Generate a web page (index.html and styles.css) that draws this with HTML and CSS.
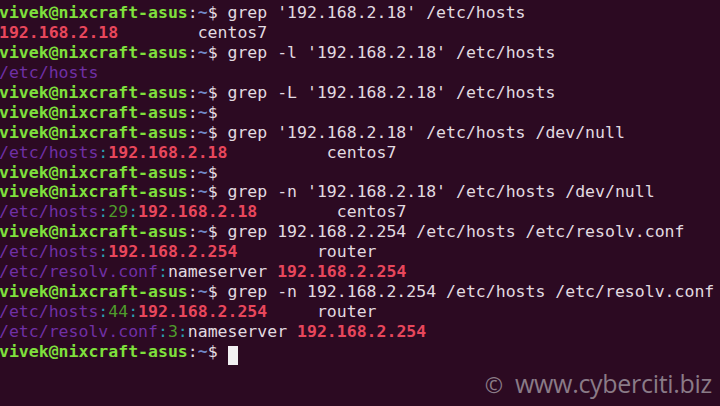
FILE: index.html
```html
<!DOCTYPE html>
<html>
<head>
<meta charset="utf-8">
<link rel="stylesheet" href="styles.css">
</head>
<body>
<div class="term">
<div class="ln"><span class="u">vivek@nixcraft-asus</span>:<span class="d">~</span>$ grep '192.168.2.18' /etc/hosts</div>
<div class="ln"><span class="m">192.168.2.18</span>        centos7</div>
<div class="ln"><span class="u">vivek@nixcraft-asus</span>:<span class="d">~</span>$ grep -l '192.168.2.18' /etc/hosts</div>
<div class="ln"><span class="f">/etc/hosts</span></div>
<div class="ln"><span class="u">vivek@nixcraft-asus</span>:<span class="d">~</span>$ grep -L '192.168.2.18' /etc/hosts</div>
<div class="ln"><span class="u">vivek@nixcraft-asus</span>:<span class="d">~</span>$</div>
<div class="ln"><span class="u">vivek@nixcraft-asus</span>:<span class="d">~</span>$ grep '192.168.2.18' /etc/hosts /dev/null</div>
<div class="ln"><span class="f">/etc/hosts</span><span class="s">:</span><span class="m">192.168.2.18</span>          centos7</div>
<div class="ln"><span class="u">vivek@nixcraft-asus</span>:<span class="d">~</span>$</div>
<div class="ln"><span class="u">vivek@nixcraft-asus</span>:<span class="d">~</span>$ grep -n '192.168.2.18' /etc/hosts /dev/null</div>
<div class="ln"><span class="f">/etc/hosts</span><span class="s">:</span><span class="n">29</span><span class="s">:</span><span class="m">192.168.2.18</span>        centos7</div>
<div class="ln"><span class="u">vivek@nixcraft-asus</span>:<span class="d">~</span>$ grep 192.168.2.254 /etc/hosts /etc/resolv.conf</div>
<div class="ln"><span class="f">/etc/hosts</span><span class="s">:</span><span class="m">192.168.2.254</span>        router</div>
<div class="ln"><span class="f">/etc/resolv.conf</span><span class="s">:</span>nameserver <span class="m">192.168.2.254</span></div>
<div class="ln"><span class="u">vivek@nixcraft-asus</span>:<span class="d">~</span>$ grep -n 192.168.2.254 /etc/hosts /etc/resolv.conf</div>
<div class="ln"><span class="f">/etc/hosts</span><span class="s">:</span><span class="n">44</span><span class="s">:</span><span class="m">192.168.2.254</span>     router</div>
<div class="ln"><span class="f">/etc/resolv.conf</span><span class="s">:</span><span class="n">3</span><span class="s">:</span>nameserver <span class="m">192.168.2.254</span></div>
<div class="ln"><span class="u">vivek@nixcraft-asus</span>:<span class="d">~</span>$ <span class="cur"> </span></div>
</div>
<div class="wm"><span class="copy">©</span> www.cyberciti.biz</div>
</body>
</html>
```
FILE: styles.css
```css
html, body {
  margin: 0;
  padding: 0;
  background: #2c0a22;
  width: 720px;
  height: 406px;
  overflow: hidden;
}
.term {
  padding: 3px 0 0 0;
  margin-left: -1px;
  font-family: "DejaVu Sans Mono", monospace;
  font-size: 16.5px;
  line-height: 19.94px;
  color: #e2dbe0;
}
.ln {
  white-space: pre;
  height: 19.94px;
}
.u {
  color: #7fe03c;
  font-weight: bold;
}
.d {
  color: #7088c8;
  font-weight: bold;
}
.m {
  color: #e8475c;
  font-weight: bold;
}
.f {
  color: #7030a6;
}
.s {
  color: #2a9cb0;
}
.n {
  color: #4f9c2c;
}
.cur {
  display: inline-block;
  width: 10px;
  height: 19px;
  background: #f2f0f2;
  vertical-align: -4px;
}
.wm {
  position: absolute;
  right: 8px;
  top: 366px;
  font-family: "Open Sans", sans-serif;
  font-size: 25px;
  color: #8a7b87;
  letter-spacing: -0.3px;
}
.copy {
  font-size: 22px;
  margin-right: 6px;
}
```
